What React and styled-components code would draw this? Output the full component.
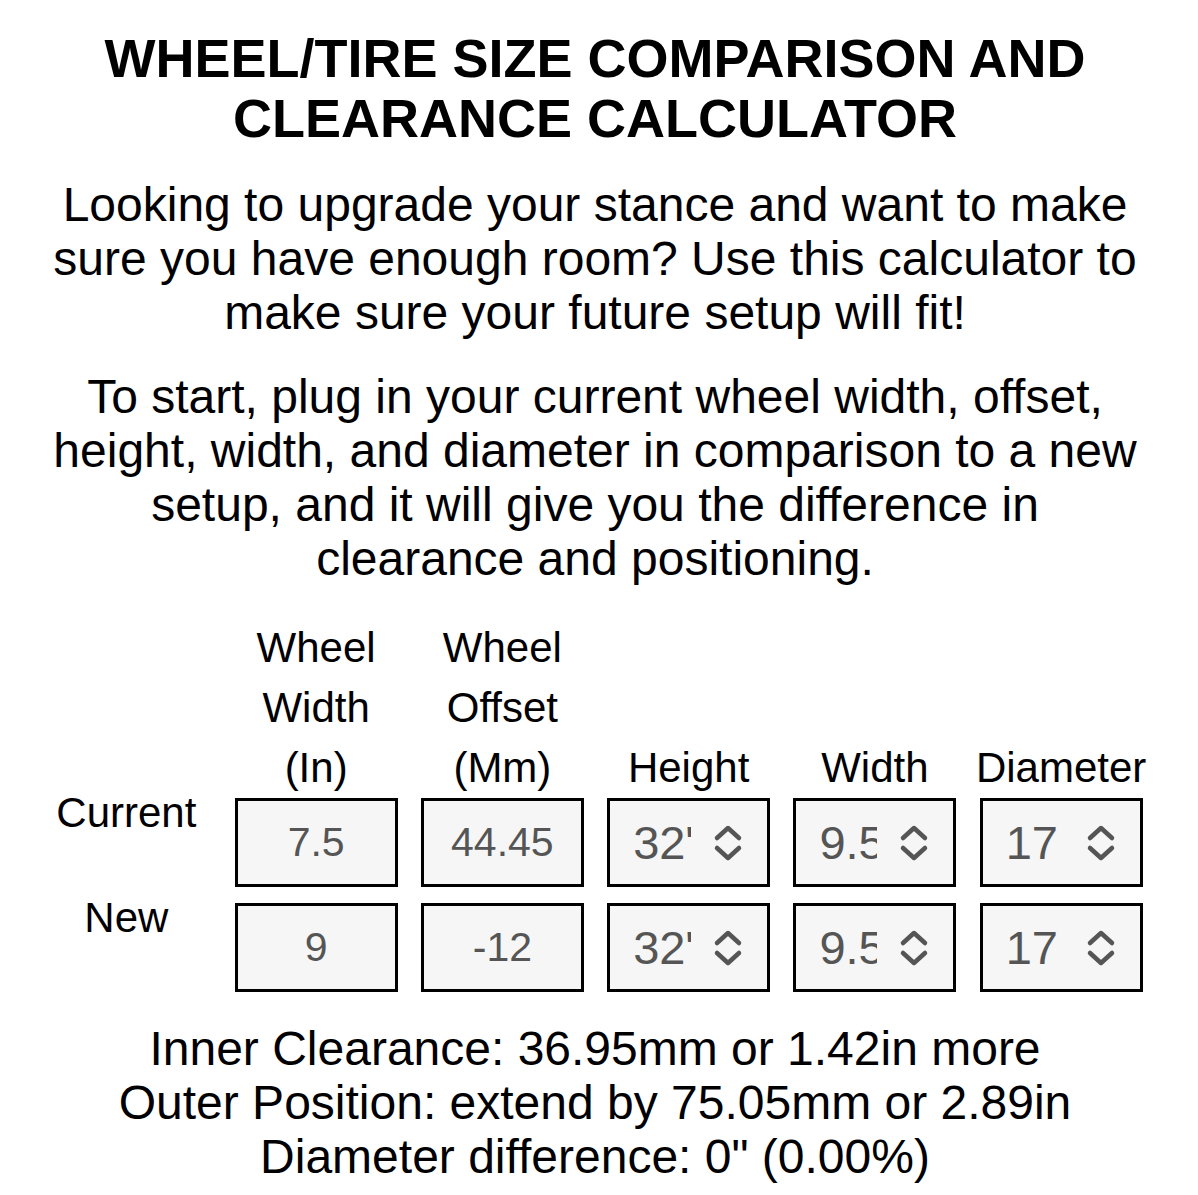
import React from 'react';
import styled, { createGlobalStyle } from 'styled-components';

const GlobalStyle = createGlobalStyle`
	body {
		margin: 0;
		background: #ffffff;
		font-family: "Liberation Sans", Arial, sans-serif;
		color: #000000;
	}
`;

const Page = styled.div`
	display: flex;
	flex-direction: column;
	align-items: center;
	padding: 28px 54px 0 46px;
	text-align: center;
`;

const Title = styled.h1`
	margin: 0;
	font-size: 54px;
	line-height: 60px;
	font-weight: 700;
`;

const Intro = styled.p`
	margin: 30px 0 0;
	font-size: 48px;
	line-height: 54px;
`;

const Table = styled.div`
	display: grid;
	grid-template-columns: 164px repeat(5, 163px);
	column-gap: 23.25px;
	row-gap: 16px;
	margin-top: 32px;
`;

const HeaderCell = styled.div`
	display: flex;
	align-items: flex-end;
	justify-content: center;
	font-size: 42px;
	line-height: 60px;
	margin-bottom: -16px;
`;

const RowLabel = styled.div`
	font-size: 42px;
	line-height: 30px;
	text-align: center;
	padding-right: 6px;
`;

const NumberBox = styled.div`
	box-sizing: border-box;
	height: 89px;
	border: 3px solid #000000;
	background: #f6f6f6;
	color: #555555;
	font-size: 41px;
	display: flex;
	align-items: center;
	justify-content: center;
`;

const SelectBox = styled.div`
	box-sizing: border-box;
	height: 89px;
	border: 3px solid #000000;
	background: #f6f6f6;
	color: #555555;
	display: flex;
	align-items: center;
	padding-left: 23px;
`;

const SelectValue = styled.span`
	width: 58px;
	overflow: hidden;
	white-space: nowrap;
	font-size: 47px;
	text-align: left;
`;

const Chevron = styled.svg`
	margin-left: 22px;
	width: 30px;
	height: 40px;
	flex: none;
`;

const Results = styled.div`
	margin-top: 30px;
	font-size: 48px;
	line-height: 54px;
`;

const ChevronIcon = () => (
	<Chevron viewBox="0 0 30 40" fill="none" stroke="#555555" strokeWidth="4.5" strokeLinecap="round" strokeLinejoin="round">
		<path d="M4 15 L15 5 L26 15" />
		<path d="M4 25 L15 35 L26 25" />
	</Chevron>
);

const SelectField = ({ value }) => (
	<SelectBox>
		<SelectValue>{value}</SelectValue>
		<ChevronIcon />
	</SelectBox>
);

const headers = [
	['Wheel', 'Width', '(In)'],
	['Wheel', 'Offset', '(Mm)'],
	['Height'],
	['Width'],
	['Diameter'],
];

const rows = [
	{ label: 'Current', width: '7.5', offset: '44.45', height: '32"', tire: '9.5"', diameter: '17' },
	{ label: 'New', width: '9', offset: '-12', height: '32"', tire: '9.5"', diameter: '17' },
];

const App = () => {
	return (
		<Page>
			<GlobalStyle />
			<Title>
				WHEEL/TIRE SIZE COMPARISON AND<br />CLEARANCE CALCULATOR
			</Title>
			<Intro>
				Looking to upgrade your stance and want to make sure you have enough room? Use this calculator to make sure your future setup will fit!
			</Intro>
			<Intro>
				To start, plug in your current wheel width, offset, height, width, and diameter in comparison to a new setup, and it will give you the difference in clearance and positioning.
			</Intro>
			<Table>
				<div />
				{headers.map((lines, i) => (
					<HeaderCell key={i}>
						<div>
							{lines.map(line => <div key={line}>{line}</div>)}
						</div>
					</HeaderCell>
				))}
				{rows.map(row => (
					<React.Fragment key={row.label}>
						<RowLabel>{row.label}</RowLabel>
						<NumberBox>{row.width}</NumberBox>
						<NumberBox>{row.offset}</NumberBox>
						<SelectField value={row.height} />
						<SelectField value={row.tire} />
						<SelectField value={row.diameter} />
					</React.Fragment>
				))}
			</Table>
			<Results>
				<div>Inner Clearance: 36.95mm or 1.42in more</div>
				<div>Outer Position: extend by 75.05mm or 2.89in</div>
				<div>Diameter difference: 0" (0.00%)</div>
			</Results>
		</Page>
	);
};

export default App;
